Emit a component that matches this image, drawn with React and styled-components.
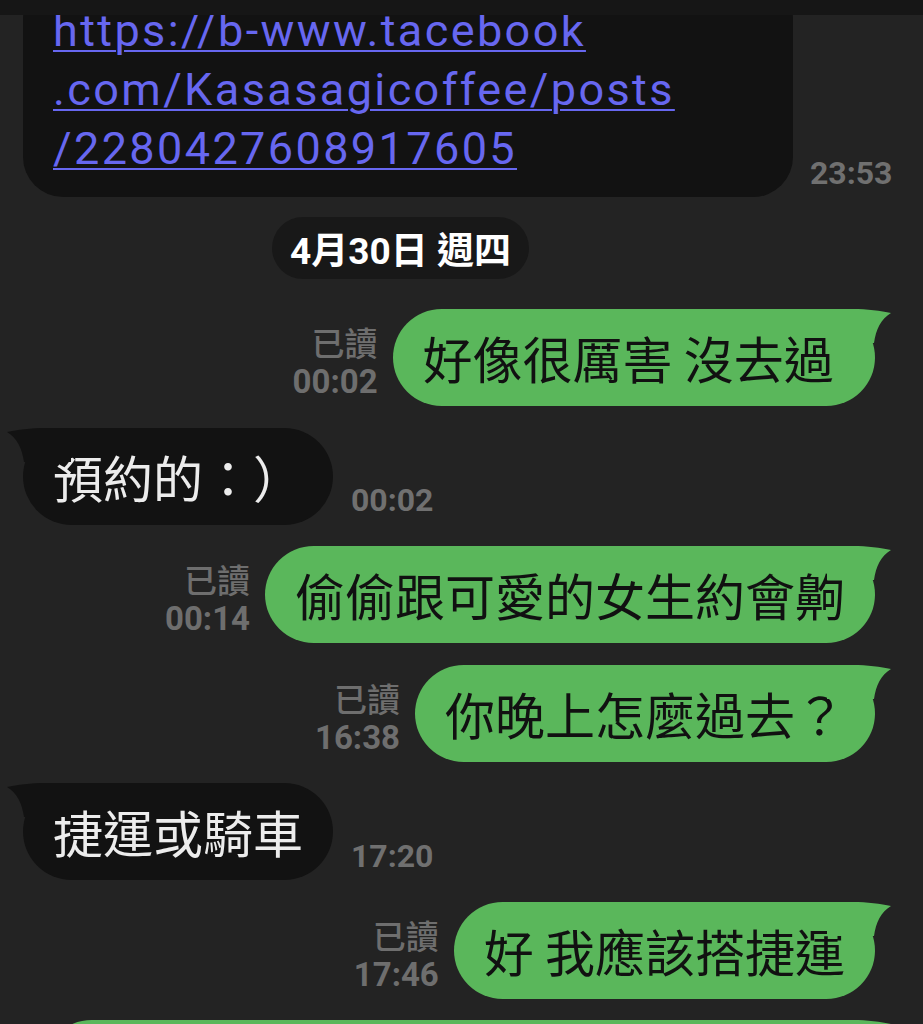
import styled, {createGlobalStyle} from 'styled-components';

const GlobalStyle=createGlobalStyle`
  html,body{margin:0;padding:0;background:#232323;}
  body{font-family:Roboto,"Noto Sans CJK TC",sans-serif;}
  *{box-sizing:border-box;}
`;

const Screen=styled.div`
  width:923px;height:1024px;overflow:hidden;
  display:flex;flex-direction:column;background:#232323;
`;

const TopBar=styled.div`height:15px;flex-shrink:0;background:#161616;`;

const MessageList=styled.div`
  flex:1;min-height:0;overflow:hidden;
  display:flex;flex-direction:column;gap:21.5px;
  padding:0 48px 0 23px;
  & > *{flex-shrink:0;}
`;

const LinkRow=styled.div`display:flex;align-items:flex-end;gap:17px;margin-top:-36px;`;

const LinkBubble=styled.div`
  flex:0 0 770px;background:#121212;border-radius:40px;
  padding:22px 30px 19px;
`;

const LinkText=styled.a`
  color:#6767f0;font-family:Roboto,sans-serif;font-size:45px;
  letter-spacing:2.4px;line-height:59px;
  text-decoration:underline;text-decoration-thickness:2px;text-underline-offset:4px;
`;

const Time=styled.span`
  font-family:Roboto,sans-serif;font-weight:700;font-size:32px;line-height:1.2;
  color:#707070;margin-bottom:5px;white-space:nowrap;
`;

const DateRow=styled.div`display:flex;margin:-2px 0 9px 249px;`;

const DatePill=styled.div`
  height:62px;padding:0 18px;border-radius:31px;background:#181818;
  display:flex;align-items:center;
  color:#fff;font-weight:700;font-size:37px;
  font-family:Roboto,"Noto Sans CJK TC",sans-serif;
`;

const Row=styled.div`
  display:flex;align-items:flex-end;
  justify-content:${({$out})=>$out?'flex-end':'flex-start'};
  gap:${({$out})=>$out?'15px':'18px'};
`;

const ReadMeta=styled.div`
  text-align:right;font-size:33px;line-height:39px;color:#6e6e6e;margin-bottom:5px;
`;
const ReadLabel=styled.span`display:block;font-family:"Noto Sans CJK TC",sans-serif;font-weight:500;`;
const ReadTime=styled.span`display:block;font-family:Roboto,sans-serif;font-weight:700;`;

const Bubble=styled.div`
  position:relative;height:97px;padding:0 30px;border-radius:48.5px;
  display:flex;align-items:center;white-space:pre;
  font-family:"Noto Sans CJK TC",sans-serif;font-size:50px;line-height:61px;
  background:${({$out})=>$out?'#5ab75b':'#121212'};
  color:${({$out})=>$out?'#111':'#ececec'};
  ${({$wide})=>$wide&&'flex:1;margin-left:20px;'}
`;

const TailSvg=styled.svg`
  position:absolute;top:0;width:64px;height:36px;
  ${({$out})=>$out?'right:-16px;':'left:-16px;transform:scaleX(-1);'}
`;

const Tail=({out})=>(
  <TailSvg $out={out} viewBox="-48 0 64 36">
    <path d="M-48 0H-22C-8 0 6 2 16 4C6 10 1 20-1 34L-48 34Z" fill={out?'#5ab75b':'#121212'}/>
  </TailSvg>
);

const messages=[
  {out:true,text:'好像很厲害 沒去過\u00a0',time:'00:02'},
  {out:false,text:'預約的：）',time:'00:02'},
  {out:true,text:'偷偷跟可愛的女生約會齁',time:'00:14'},
  {out:true,text:'你晚上怎麼過去？',time:'16:38'},
  {out:false,text:'捷運或騎車',time:'17:20'},
  {out:true,text:'好 我應該搭捷運',time:'17:46'},
];

export default function App(){
  return(
    <>
      <GlobalStyle/>
      <Screen>
        <TopBar/>
        <MessageList>
          <LinkRow>
            <LinkBubble>
              <LinkText href="#">
                https://b-www.tacebook<br/>.com/Kasasagicoffee/posts<br/>/2280427608917605
              </LinkText>
            </LinkBubble>
            <Time>23:53</Time>
          </LinkRow>

          <DateRow><DatePill>4月30日 週四</DatePill></DateRow>

          {messages.map((m,i)=>m.out?(
            <Row $out key={i}>
              <ReadMeta><ReadLabel>已讀</ReadLabel><ReadTime>{m.time}</ReadTime></ReadMeta>
              <Bubble $out>{m.text}<Tail out/></Bubble>
            </Row>
          ):(
            <Row key={i}>
              <Bubble>{m.text}<Tail/></Bubble>
              <Time>{m.time}</Time>
            </Row>
          ))}

          <Row $out>
            <Bubble $out $wide><Tail out/></Bubble>
          </Row>
        </MessageList>
      </Screen>
    </>
  );
}
